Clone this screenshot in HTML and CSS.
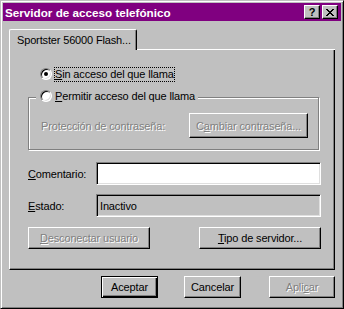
FILE: index.html
```html
<!DOCTYPE html>
<html lang="es">
<head>
    <meta charset="UTF-8">
    <title>Servidor de acceso telefónico</title>
    <link rel="stylesheet" href="styles.css">
</head>
<body>
    <div class="window">
        <div class="titlebar">
            <span class="title">Servidor de acceso telefónico</span>
            <div class="cap-buttons">
                <button class="cap-btn">?</button>
                <button class="cap-btn">
                    <svg width="8" height="7" viewBox="0 0 8 7"><path d="M0 0h2v1H0z M6 0h2v1H6z M1 1h2v1H1z M5 1h2v1H5z M2 2h4v1H2z M3 3h2v1H3z M2 4h4v1H2z M1 5h2v1H1z M5 5h2v1H5z M0 6h2v1H0z M6 6h2v1H6z" fill="#000"/></svg>
                </button>
            </div>
        </div>

        <div class="content">
            <div class="tabstrip">
                <div class="tab">Sportster 56000 Flash...</div>
                <div class="tabfill"></div>
            </div>

            <div class="panel">
                <div class="radio-row">
                    <span class="radio checked"></span>
                    <span class="focus"><u>S</u>in acceso del que llama</span>
                </div>

                <div class="group">
                    <div class="radio-row legend">
                        <span class="radio"></span>
                        <span><u>P</u>ermitir acceso del que llama</span>
                    </div>
                    <div class="group-row">
                        <span class="disabled">Protección de contraseña:</span>
                        <button class="btn btn-change disabled">C<u>a</u>mbiar contraseña...</button>
                    </div>
                </div>

                <div class="field-row first">
                    <label class="field-label" for="comment"><u>C</u>omentario:</label>
                    <input class="field" id="comment" type="text">
                </div>
                <div class="field-row">
                    <span class="field-label"><u>E</u>stado:</span>
                    <div class="field readonly">Inactivo</div>
                </div>

                <div class="action-row">
                    <button class="btn disabled"><u>D</u>esconectar usuario</button>
                    <button class="btn"><u>T</u>ipo de servidor...</button>
                </div>
            </div>

            <div class="footer">
                <button class="btn btn-default">Aceptar</button>
                <button class="btn btn-cancel">Cancelar</button>
                <button class="btn btn-apply disabled">Apli<u>c</u>ar</button>
            </div>
        </div>
    </div>
</body>
</html>
```

FILE: styles.css
```css
* {
    box-sizing: border-box;
}
body {
    margin: 0;
    font-family: "Liberation Sans", Arial, sans-serif;
    font-size: 11px;
    letter-spacing: -0.15px;
    color: #000;
    background-color: #c0c0c0;
}
.window {
    width: 344px;
    height: 309px;
    background-color: #c0c0c0;
    border: 1px solid;
    border-color: #c0c0c0 #000 #000 #c0c0c0;
    box-shadow: inset 1px 1px #fff, inset -1px -1px #808080;
    padding: 2px;
}
.titlebar {
    height: 18px;
    background-color: #800080;
    color: #fff;
    font-weight: bold;
    display: flex;
    align-items: center;
    justify-content: space-between;
    padding: 0 3px 0 2px;
}
.title {
    font-size: 11.7px;
    letter-spacing: 0;
    white-space: nowrap;
}
.cap-buttons {
    display: flex;
    gap: 2px;
}
.cap-btn {
    width: 16px;
    height: 14px;
    padding: 0;
    border: 1px solid;
    border-color: #fff #000 #000 #fff;
    box-shadow: inset -1px -1px #808080;
    background-color: #c0c0c0;
    display: flex;
    align-items: center;
    justify-content: center;
    font: bold 11px "Liberation Sans", Arial, sans-serif;
    color: #000;
}
.content {
    padding: 8px 6px 0 6px;
}
.tabstrip {
    display: flex;
    height: 21px;
}
.tab {
    width: 128px;
    height: 21px;
    border-top: 1px solid #fff;
    border-left: 1px solid #fff;
    border-right: 1px solid #000;
    border-radius: 2px 2px 0 0;
    box-shadow: inset -1px 0 #808080;
    display: flex;
    align-items: center;
    padding: 0 0 1px 7px;
    white-space: nowrap;
}
.tabfill {
    flex: 1;
    border-bottom: 1px solid #fff;
}
.panel {
    height: 220px;
    border: 1px solid;
    border-top: none;
    border-color: #fff #000 #000 #fff;
    box-shadow: inset -1px -1px #808080;
    padding: 17px 13px 0 18px;
}
.radio-row {
    display: flex;
    align-items: center;
    gap: 3px;
    height: 14px;
    margin-left: 12px;
    white-space: nowrap;
}
.radio {
    width: 12px;
    height: 12px;
    border-radius: 50%;
    background-color: #fff;
    border: 1px solid;
    border-color: #808080 #fff #fff #808080;
    box-shadow: inset 1px 1px #000, inset -1px -1px #dfdfdf;
}
.radio.checked::after {
    content: "";
    display: block;
    width: 4px;
    height: 4px;
    margin: 3px;
    border-radius: 50%;
    background-color: #000;
}
.focus {
    outline: 1px dotted #000;
    line-height: 13px;
}
.group {
    width: 291px;
    margin-top: 16px;
    border: 1px solid #808080;
    box-shadow: inset 1px 1px #fff, 1px 1px #fff;
    padding: 0 10px 11px 0;
}
.legend {
    width: fit-content;
    margin: -9px 0 0 7px;
    padding: 0 3px 0 4px;
    background-color: #c0c0c0;
}
.group-row {
    display: flex;
    align-items: center;
    justify-content: space-between;
    margin-top: 10px;
    padding-left: 12px;
}
.disabled {
    color: #808080;
    text-shadow: 1px 1px #fff;
}
.btn {
    height: 22px;
    padding: 0;
    border: 1px solid;
    border-color: #fff #000 #000 #fff;
    box-shadow: inset -1px -1px #808080;
    background-color: #c0c0c0;
    font: 11px "Liberation Sans", Arial, sans-serif;
    letter-spacing: -0.15px;
    color: #000;
    white-space: nowrap;
}
.btn.disabled {
    color: #808080;
}
.btn-change {
    width: 119px;
    height: 25px;
}
.field-row {
    display: flex;
    align-items: center;
    margin-top: 9px;
}
.field-row.first {
    margin-top: 12px;
}
.field-label {
    width: 68px;
    flex: none;
}
.field {
    flex: 1;
    height: 23px;
    margin: 0;
    padding: 0 3px;
    border: 1px solid;
    border-color: #808080 #fff #fff #808080;
    box-shadow: inset 1px 1px #000, inset -1px -1px #dfdfdf;
    background-color: #fff;
    font: 11px "Liberation Sans", Arial, sans-serif;
    letter-spacing: -0.15px;
    display: flex;
    align-items: center;
    outline: none;
}
.field.readonly {
    background-color: #c0c0c0;
}
.action-row {
    display: flex;
    justify-content: space-between;
    margin-top: 10px;
}
.action-row .btn {
    width: 122px;
}
.footer {
    display: flex;
    justify-content: flex-end;
    margin-top: 6px;
}
.footer .btn {
    width: 57px;
}
.btn-default {
    border-color: #000;
    box-shadow: inset 1px 1px #fff, inset -1px -1px #000, inset -2px -2px #808080;
}
.btn-cancel {
    margin-left: 26px;
}
.footer .btn-apply {
    width: 66px;
    margin-left: 28px;
}
```
